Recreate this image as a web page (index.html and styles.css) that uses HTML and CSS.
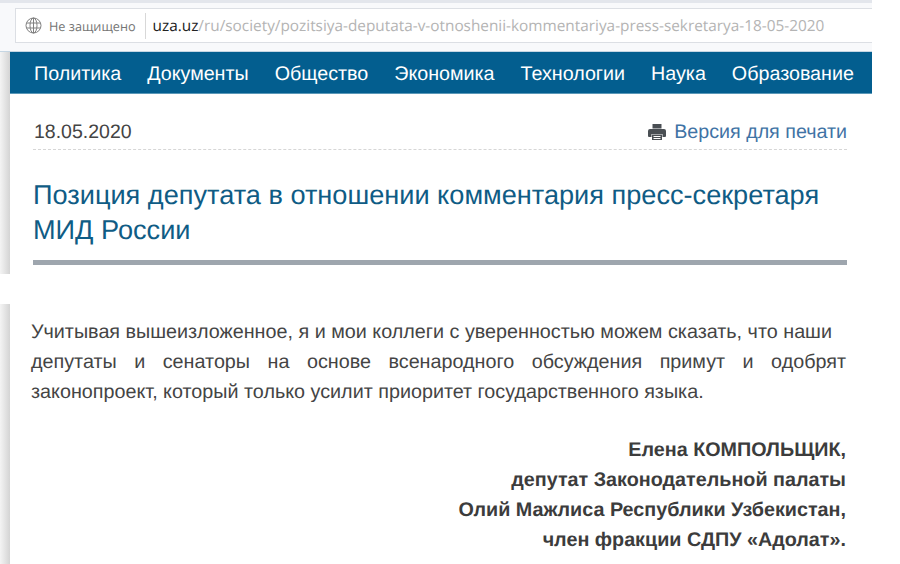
FILE: index.html
```html
<!DOCTYPE html>
<html lang="ru">
<head>
<meta charset="utf-8">
<title>Позиция депутата</title>
<link rel="stylesheet" href="styles.css">
</head>
<body>
<header class="chrome">
  <div class="address">
    <svg class="globe" width="17" height="17" viewBox="0 0 17 17" fill="none" stroke="#808080" stroke-width="1">
      <circle cx="8.5" cy="8.5" r="7.5"/>
      <ellipse cx="8.5" cy="8.5" rx="3.5" ry="7.5"/>
      <path d="M1.5 6h14M1.5 11h14M8.5 1v15"/>
    </svg>
    <span class="secure">Не защищено</span>
    <span class="url"><span class="host">uza.uz</span>/ru/society/pozitsiya-deputata-v-otnoshenii-kommentariya-press-sekretarya-18-05-2020</span>
  </div>
</header>
<section class="sheet sheet-top">
  <nav class="nav">
    <a>Политика</a><a>Документы</a><a>Общество</a><a>Экономика</a><a>Технологии</a><a>Наука</a><a>Образование</a>
  </nav>
  <div class="head">
    <div class="meta">
      <span class="date">18.05.2020</span>
      <a class="print">
        <svg width="18" height="16" viewBox="0 0 18 16">
          <path fill="#4a4f54" d="M4.5 0h9v4.5h-9z"/>
          <path fill="#4a4f54" d="M2 5h14a2 2 0 0 1 2 2v5a1 1 0 0 1-1 1h-2.500v-3h-11v3H1a1 1 0 0 1-1-1V7a2 2 0 0 1 2-2z"/>
          <path fill="#4a4f54" d="M4 10.500h10V16H4z"/>
          <path fill="none" stroke="#fff" stroke-width="1" d="M5.500 12.500h7M5.500 14.500h7"/>
        </svg>
        Версия для печати
      </a>
    </div>
    <h1 class="title">Позиция депутата в отношении комментария пресс-секретаря МИД России</h1>
  </div>
</section>
<section class="sheet sheet-bottom">
  <p class="body">
    <span class="line line-short">Учитывая вышеизложенное, я и мои коллеги с уверенностью можем сказать, что наши</span>
    <span class="line">депутаты и сенаторы на основе всенародного обсуждения примут и одобрят</span>
    <span class="line-end">законопроект, который только усилит приоритет государственного языка.</span>
  </p>
  <p class="sign">Елена КОМПОЛЬЩИК,<br>депутат Законодательной палаты<br>Олий Мажлиса Республики Узбекистан,<br>член фракции СДПУ «Адолат».</p>
</section>
</body>
</html>
```
FILE: styles.css
```css
html, body { margin: 0; padding: 0; }
body {
  width: 900px;
  height: 564px;
  overflow: hidden;
  background: #fff;
  font-family: "Liberation Sans", Arial, sans-serif;
  text-rendering: geometricPrecision;
}
.chrome {
  box-sizing: border-box;
  width: 872px;
  height: 52px;
  padding: 5px 0 0 15px;
  background: #f8f9fb;
  border-top: 3px solid #e3e6ec;
  border-bottom: 1px solid #c5d6e3;
}
.address {
  box-sizing: border-box;
  height: 35px;
  display: flex;
  align-items: center;
  background: #fff;
  border: 1px solid #dcdfe4;
  border-right: 0;
  padding-left: 9px;
}
.globe { flex: none; }
.secure {
  font-family: "Open Sans", sans-serif;
  font-size: 12.7px;
  color: #757575;
  margin-left: 7px;
  padding-right: 9px;
  border-right: 1px solid #d8d8d8;
  line-height: 26px;
}
.url {
  font-family: "Open Sans", sans-serif;
  font-size: 15.35px;
  color: #b4b4b4;
  margin-left: 7px;
  white-space: nowrap;
}
.host { color: #222; }
.sheet {
  box-sizing: border-box;
  width: 872px;
  padding-left: 10px;
  background: linear-gradient(to right, #f4f4f4 0, #d4d4d4 10px, #fff 10px);
}
.sheet-top { height: 222px; }
.sheet-bottom {
  margin-top: 30px;
  height: 260px;
  padding-top: 1px;
}
.nav {
  display: flex;
  gap: 26px;
  height: 42px;
  align-items: center;
  padding: 4px 0 0 24px;
  background: #035e8f;
  border-bottom: 1px solid #5a98b8;
  box-sizing: border-box;
}
.nav a { color: #fff; font-size: 19.7px; white-space: nowrap; }
.head { padding: 0 25px 0 23px; }
.meta {
  display: flex;
  justify-content: space-between;
  align-items: center;
  height: 56px;
  border-bottom: 1px dashed #d6d6d6;
  box-sizing: border-box;
  padding-top: 21px;
}
.date { font-size: 19.5px; color: #444; margin-left: 1px; }
.print { display: flex; align-items: center; gap: 8px; font-size: 19.7px; color: #3f73a5; }
.title {
  margin: 0;
  padding: 27px 0 13px;
  font-weight: normal;
  font-size: 27.15px;
  line-height: 35px;
  color: #0f5c85;
  border-bottom: 5px solid #9ea6ae;
}
.body {
  margin: 12px 26px 0 21px;
  font-size: 19.75px;
  line-height: 30px;
  color: #444;
}
.line { display: block; text-align: justify; text-align-last: justify; }
.line-short { margin-right: 14px; }
.line-end { display: block; }
.sign {
  margin: 28px 26px 0 0;
  font-size: 19.75px;
  line-height: 30px;
  font-weight: bold;
  color: #3c3c3c;
  text-align: right;
}
```
